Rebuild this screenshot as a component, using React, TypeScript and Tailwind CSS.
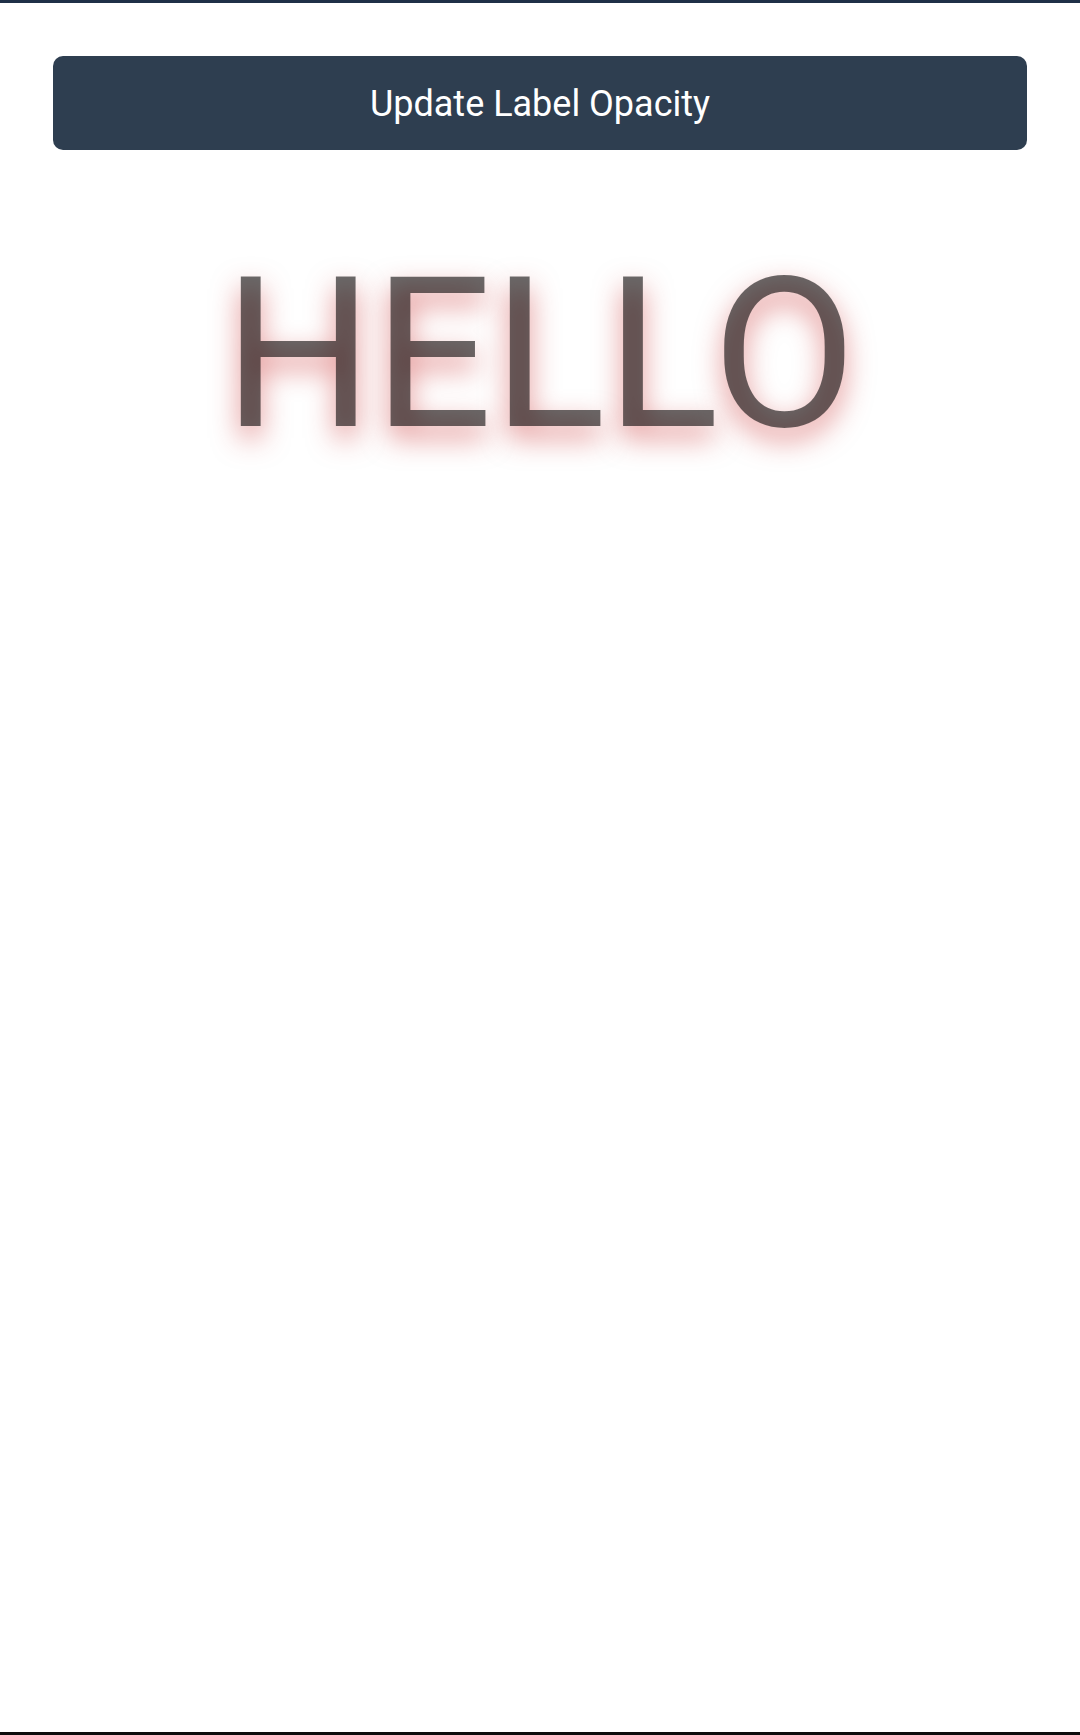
import { useState } from 'react'

const App = () => {
  const [opacity, setOpacity] = useState(0.58)

  const updateOpacity = () => {
    // step the label alpha, wrap back round when it hits 1
    setOpacity((o) => (o >= 1 ? 0.2 : Math.round((o + 0.2) * 100) / 100))
  }

  return (
    <div className="min-h-[1735px] flex flex-col bg-white border-t-[3px] border-b-[3px] border-t-[#1f3047] border-b-[#0d0d0d] font-['Roboto',sans-serif]">
      <div className="px-[53px] pt-[53px]">
        <button
          onClick={updateOpacity}
          className="w-full h-[94px] pt-[2px] rounded-[10px] bg-[#2e3e50] text-white text-[36px] flex items-center justify-center"
        >
          Update Label Opacity
        </button>
      </div>

      <div className="mt-[47px] flex justify-center">
        <span
          className="text-[210px] [text-shadow:0_12px_28px_rgba(200,40,40,0.5)]"
          style={{ color: `rgba(0,0,0,${opacity})` }}
        >
          HELLO
        </span>
      </div>
    </div>
  )
}

export default App
